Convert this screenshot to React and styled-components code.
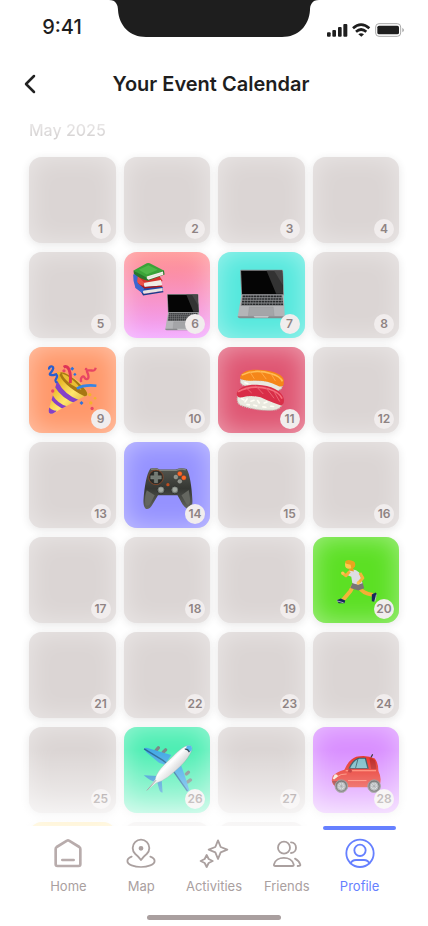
import React from "react";
import styled, { createGlobalStyle } from "styled-components";

const GlobalStyle = createGlobalStyle`
  *, *::before, *::after { box-sizing: border-box; }
  body {
    margin: 0;
    background: #fff;
    color: #1e1e1e;
    font-family: Inter, "Liberation Sans", sans-serif;
  }
`;

const Screen = styled.div`
  display: flex;
  flex-direction: column;
  height: 100vh;
  overflow: hidden;
`;

const StatusBar = styled.div`
  display: grid;
  grid-template-columns: 1fr 210px 1fr;
  height: 56px;
`;

const Clock = styled.time`
  justify-self: center;
  padding: 14px 0 0 15px;
  font-size: 20px;
  line-height: 26px;
  font-weight: 500;
`;

const Indicators = styled.div`
  display: flex;
  justify-content: flex-end;
  padding: 22px 23px 0 0;
`;

const Header = styled.header`
  display: grid;
  grid-template-columns: 24px 1fr 24px;
  align-items: center;
  height: 56px;
  padding: 0 24px 0 18px;
`;

const BackButton = styled.button`
  display: grid;
  place-items: center;
  width: 24px;
  height: 24px;
  padding: 0;
  border: 0;
  background: none;
  color: #222;
  cursor: pointer;
`;

const Title = styled.h1`
  margin: 0;
  text-align: center;
  font-size: 20px;
  line-height: 28px;
  font-weight: 600;
`;

const Calendar = styled.main`
  flex: 1;
  min-height: 0;
  overflow: auto;
  padding: 7px 29px 0;
  scrollbar-width: none;
`;

const Month = styled.h2`
  margin: 0 0 16px;
  font-size: 16px;
  line-height: 22px;
  font-weight: 500;
  background: linear-gradient(#e9e7e7 20%, #d3d0d0 90%);
  background-clip: text;
  color: transparent;
`;

const Days = styled.ol`
  display: grid;
  grid-template-columns: repeat(4, 1fr);
  gap: 9px 8px;
  margin: 0;
  padding: 0;
  list-style: none;
`;

const Day = styled.li`
  display: grid;
  grid-template: minmax(0, 1fr) / minmax(0, 1fr);
  height: 86px;
  border-radius: 13px;
  background: ${(p) => p.$fill || "#dbd5d4"};
  box-shadow:
    0 2px 8px rgba(60, 50, 50, 0.12),
    inset 0 0 26px rgba(255, 255, 255, 0.45);
`;

const Art = styled.svg`
  grid-area: 1 / 1;
  width: 100%;
  height: 100%;
`;

const Badge = styled.span`
  grid-area: 1 / 1;
  place-self: end;
  z-index: 1;
  display: grid;
  place-items: center;
  width: 20px;
  height: 20px;
  margin: 0 5px 4px 0;
  border-radius: 50%;
  background: #f1eded;
  color: #8e8383;
  font-size: 12px;
  line-height: 16px;
  font-weight: 600;
`;

const TabBar = styled.nav`
  position: relative;
  z-index: 2;
  display: grid;
  grid-template-columns: repeat(5, 1fr);
  padding: 0 32px;
  background: #fff;

  &::before {
    content: "";
    position: absolute;
    left: 0;
    right: 0;
    bottom: 100%;
    height: 76px;
    background: linear-gradient(rgba(255, 255, 255, 0), rgba(255, 255, 255, 0.75));
    pointer-events: none;
  }
`;

const Tab = styled.a`
  display: flex;
  flex-direction: column;
  align-items: center;
  gap: 8px;
  padding-top: 8px;
  border-top: 4px solid transparent;
  color: ${(p) => (p.$active ? "#6680ff" : "#aaa09f")};
  font-size: 13px;
  line-height: 20px;
  text-decoration: none;
  position: relative;

  &::before {
    content: "";
    position: absolute;
    top: -4px;
    left: 0;
    right: 0;
    height: 4px;
    border-radius: 2px;
    background: ${(p) => (p.$active ? "#6680ff" : "transparent")};
  }
`;

const TabIcon = styled.svg`
  width: 30px;
  height: 30px;
  fill: none;
  stroke: currentColor;
  stroke-width: 5.5;
  stroke-linecap: round;
  stroke-linejoin: round;
`;

const HomeBar = styled.div`
  display: flex;
  justify-content: center;
  padding: 19px 0 6px;

  &::after {
    content: "";
    width: 134px;
    height: 5px;
    border-radius: 3px;
    background: #a99f9f;
  }
`;

const Laptop = () => (
  <g>
    <path d="M87 72H211Q214 72 214 76L217 150H88L84 76Q84 72 87 72Z" fill="#8b8d8f" />
    <path d="M87 75H211L214 146H90Z" fill="#050505" />
    <path d="M164 75H211L214 144H193Z" fill="#333" />
    <path d="M187 75H211L213 118Z" fill="#474747" />
    <path d="M88 147H216L219 212Q219 217 214 217H82Q77 217 77 212Z" fill="#b4b5b8" />
    <path d="M90 149H213L215 181H86Z" fill="#8d8e91" />
    <g stroke="#26282a" strokeWidth="5" strokeDasharray="7 1.5">
      <path d="M92 152H211" />
      <path d="M91 160H212" />
      <path d="M90 168H213" />
      <path d="M89 176H214" />
    </g>
    <path d="M112 184H184L187 211H109Z" fill="#a4a5a8" stroke="#8f9094" />
    <path d="M77 212H219V214Q218 218 213 218H83Q78 218 77 214Z" fill="#88898c" />
    <path d="M125 212H171L168 216H128Z" fill="#d4d5d7" />
  </g>
);

const StudyArt = () => (
  <Art viewBox="16 18 260 260" aria-hidden="true">
    <path d="M49 124L72 142L133 136V125L109 112Z" fill="#2549a5" />
    <path d="M71 135L132 127V136L74 144Z" fill="#e7e3df" />
    <path d="M68 137L74 147L134 138" fill="none" stroke="#183b89" strokeWidth="4" />
    <path d="M43 86L55 83L78 122L71 143L50 127Q42 105 43 86Z" fill="#3b66cf" />
    <path d="M57 90L116 80L132 106L75 123L59 112Z" fill="#d3312d" />
    <path d="M73 112L127 103L131 119L78 124Z" fill="#efebe5" />
    <path d="M59 111L77 126L131 121" fill="none" stroke="#aa1618" strokeWidth="4" />
    <path d="M57 90L55 108Q61 119 73 120L77 111Z" fill="#ea5148" />
    <path d="M44 74L84 52Q88 50 93 52L137 75L85 96Q80 98 74 94Z" fill="#3aa338" />
    <path d="M44 74L83 95L136 74L138 86L88 105Q65 101 45 84Z" fill="#28782a" />
    <path d="M84 92L133 77L134 87L89 102Q82 99 84 92Z" fill="#f4f1eb" />
    <path d="M85 97L134 82" stroke="#c9c5bd" />
    <path d="M60 72L89 58L117 72L84 86Z" fill="#4fb748" />
    <g transform="translate(84 91) scale(.73 .75)">
      <Laptop />
    </g>
  </Art>
);

const LaptopArt = () => (
  <Art viewBox="18 18 260 260" aria-hidden="true">
    <Laptop />
  </Art>
);

const PartyArt = () => (
  <Art viewBox="21 19 260 260" aria-hidden="true">
    <defs>
      <linearGradient id="cone" x1="0" y1="0" x2="1" y2="1">
        <stop offset="0" stopColor="#9a6b10" />
        <stop offset=".3" stopColor="#e9b828" />
        <stop offset=".55" stopColor="#ffe66d" />
        <stop offset="1" stopColor="#c88916" />
      </linearGradient>
      <clipPath id="coneShape">
        <path d="M112 99Q119 90 136 101Q178 122 198 160Q199 169 188 168L91 221Q79 222 79 211Z" />
      </clipPath>
    </defs>
    <g clipPath="url(#coneShape)">
      <path d="M70 80H210V230H70Z" fill="url(#cone)" />
      <path d="M106 122Q128 165 174 181L162 190Q120 175 98 139Z" fill="#8540c8" />
      <path d="M91 163Q107 191 139 200L128 208Q104 199 86 177Z" fill="#8540c8" />
      <path d="M79 199Q88 211 104 212L91 225L75 218Z" fill="#8540c8" />
    </g>
    <path d="M112 99C115 118 143 145 188 168C203 168 199 151 167 124C139 100 117 91 112 99Z" fill="#a77713" />
    <path d="M120 99C124 117 151 137 179 149C165 127 139 104 120 99Z" fill="#e9bd32" />
    <path d="M125 80C139 72 148 93 145 128" fill="none" stroke="#df3457" strokeWidth="9" />
    <path d="M165 145Q186 132 224 136" fill="none" stroke="#3685e5" strokeWidth="8" />
    <path d="M81 87C79 74 99 75 92 88S78 102 88 104S106 95 105 107S94 117 105 128" fill="none" stroke="#285fce" strokeWidth="7" />
    <path d="M178 125C174 110 185 104 188 111S201 119 200 107S190 92 200 90S219 96 222 82" fill="none" stroke="#e84663" strokeWidth="7" />
    <g fill="#2e72db"><path d="M151 79l6 6-6 6-6-6ZM159 97l5 5-5 5-5-5ZM179 182l6 6-6 6-6-6Z" /></g>
    <g fill="#e84663"><circle cx="126" cy="91" r="5" /><circle cx="92" cy="152" r="5" /><circle cx="211" cy="205" r="5" /><circle cx="193" cy="86" r="4" /></g>
    <g fill="#f3b32b"><circle cx="110" cy="98" r="5" /><circle cx="204" cy="163" r="5" /><circle cx="207" cy="188" r="5" /><circle cx="220" cy="174" r="4" /></g>
  </Art>
);

const Rice = ({ d }) => <path d={d} fill="#e9e9df" stroke="#c4c7bc" strokeWidth="4" strokeDasharray="3 3" />;

const SushiArt = () => (
  <Art viewBox="18 18 260 260" aria-hidden="true">
    <Rice d="M86 116Q82 132 98 135L197 150Q212 146 211 134L191 122Z" />
    <path d="M84 109C90 91 113 86 137 87C172 87 211 98 216 116V131Q210 142 198 135Q166 118 127 119Q97 123 84 112Z" fill="#f58619" />
    <path d="M89 103Q129 83 179 99Q206 107 212 122" fill="none" stroke="#ffbd56" strokeWidth="5" />
    <path d="M113 92L127 114M145 91L163 115M177 98L191 121" stroke="#ffa848" strokeWidth="3" />
    <Rice d="M77 166Q72 188 88 195Q133 211 182 209Q209 207 211 188L181 164Z" />
    <path d="M74 158C81 138 105 131 135 132C178 133 211 151 216 174Q219 190 208 195Q190 189 166 179Q128 159 91 170Q73 174 74 158Z" fill="#d92e48" />
    <path d="M78 153Q119 130 171 145Q203 155 211 174" fill="none" stroke="#f66f7d" strokeWidth="5" />
    <path d="M101 140L119 157M131 135L154 160M163 142L187 173M188 155L204 183" stroke="#ea6675" strokeWidth="3" />
    <g stroke="#fffef5" strokeWidth="5" strokeLinecap="round">
      <path d="M88 174l8 4M105 175l-6 9M117 182l9-3M137 180l5 7M157 187l8-3M177 197l8 1M126 194l8 2M105 192l7 1M153 199l9 1M99 126l8 3" />
    </g>
  </Art>
);

const GameArt = () => (
  <Art viewBox="16 18 260 260" aria-hidden="true">
    <defs>
      <linearGradient id="pad" x1="0" y1="0" x2="0" y2="1">
        <stop offset="0" stopColor="#545650" />
        <stop offset=".5" stopColor="#353733" />
        <stop offset="1" stopColor="#62645f" />
      </linearGradient>
    </defs>
    <path d="M95 98Q113 94 123 101H171Q190 94 205 100C214 116 220 151 222 194C223 225 210 230 192 206L177 179H118L99 211C86 230 73 220 74 194C77 153 84 112 95 98Z" fill="url(#pad)" />
    <path d="M97 101Q113 97 122 104H173Q189 97 202 102" fill="none" stroke="#81837c" strokeWidth="4" />
    <path d="M84 164Q76 184 80 209Q87 214 94 206L108 179ZM189 179L205 207Q215 213 215 190L211 163Z" fill="#646660" />
    <circle cx="112" cy="125" r="22" fill="#282a27" stroke="#a54d26" strokeWidth="2" />
    <path d="M107 109h10v11h11v10h-11v11h-10v-11H96v-10h11Z" fill="#737a73" stroke="#a3a8a0" />
    <g fill="#ff6827" stroke="#ba421e"><circle cx="184" cy="114" r="7" /><circle cx="196" cy="126" r="7" /></g>
    <g fill="#90938c" stroke="#b8bbb1"><circle cx="172" cy="124" r="6" /><circle cx="184" cy="137" r="6" /></g>
    <circle cx="148" cy="147" r="5" fill="#bd4e21" />
    <g fill="#727873" stroke="#30322f" strokeWidth="3"><circle cx="127" cy="163" r="12" /><circle cx="169" cy="163" r="12" /></g>
    <g fill="#a1a7a0"><circle cx="127" cy="162" r="7" /><circle cx="169" cy="162" r="7" /></g>
  </Art>
);

const RunArt = () => (
  <Art viewBox="21 17 260 260" aria-hidden="true">
    <path d="M144 161L133 181L110 208" fill="none" stroke="#f4b33b" strokeWidth="12" strokeLinejoin="round" />
    <path d="M161 169Q168 187 201 192" fill="none" stroke="#f3ae35" strokeWidth="11" />
    <path d="M104 203L118 209L115 217H98L92 208Z" fill="#17275a" />
    <path d="M198 191L210 185Q214 187 212 195L206 213L198 211Z" fill="#17275a" />
    <path d="M92 210L113 216M207 212L212 191" stroke="#e9e6eb" strokeWidth="2" />
    <path d="M142 151L170 153L175 172L157 179L133 171Z" fill="#797574" />
    <path d="M130 118Q145 110 160 124L170 157Q155 164 139 156L136 137L123 132Z" fill="#dedde2" />
    <path d="M131 121L120 134L109 126" fill="none" stroke="#f4b33b" strokeWidth="9" strokeLinejoin="round" />
    <path d="M162 126L171 141L158 155" fill="none" stroke="#f4b33b" strokeWidth="9" strokeLinejoin="round" />
    <path d="M127 114L141 109L144 121L132 119Z" fill="#e99b27" />
    <circle cx="129" cy="101" r="12" fill="#ffc94c" />
    <path d="M117 92Q122 84 136 88Q152 91 147 107L137 116L134 101L121 98Z" fill="#e9a51e" />
    <circle cx="110" cy="126" r="5" fill="#ffc452" />
    <circle cx="157" cy="156" r="5" fill="#ffc452" />
  </Art>
);

const PlaneArt = () => (
  <Art viewBox="16 18 260 260" aria-hidden="true">
    <defs>
      <linearGradient id="fuselage" x1="0" y1="0" x2="1" y2="1">
        <stop offset=".2" stopColor="#aeb1b4" />
        <stop offset=".45" stopColor="#fff" />
        <stop offset=".75" stopColor="#a5a7aa" />
      </linearGradient>
    </defs>
    <g stroke="#7c8788" strokeWidth="10" strokeLinecap="round">
      <path d="M112 89L119 81M134 94L141 87M204 160L210 155M208 184L216 178" />
    </g>
    <path d="M76 84Q79 79 89 82L158 103L139 132L121 126L84 95Z" fill="#43a9e5" />
    <path d="M76 84L133 119L143 127" fill="none" stroke="#276896" strokeWidth="4" />
    <path d="M163 149L186 129Q199 162 212 208Q210 216 206 212L180 177Z" fill="#43a9e5" />
    <path d="M164 151L207 212" stroke="#236c9a" strokeWidth="4" />
    <path d="M75 164L116 166L111 184Q98 184 75 164Z" fill="#2a91d1" />
    <path d="M115 181L129 178L132 216Q125 218 121 205Z" fill="#2a91d1" />
    <path d="M205 75Q224 69 220 89C207 121 177 146 148 169Q129 183 112 187L87 208L110 176C113 156 134 133 155 115C177 93 190 80 205 75Z" fill="url(#fuselage)" stroke="#84999b" />
    <path d="M205 75Q224 69 220 89L216 92Q207 91 203 82Z" fill="#58b9ed" />
    <path d="M199 85Q208 83 213 94" fill="none" stroke="#344b5b" strokeWidth="4" />
    <path d="M84 210L112 179" stroke="#717c7b" strokeWidth="3" />
  </Art>
);

const CarArt = () => (
  <Art viewBox="21 18 260 260" aria-hidden="true">
    <path d="M195 111L200 102" stroke="#333" strokeWidth="4" strokeLinecap="round" />
    <path d="M80 166Q90 154 115 147Q128 117 151 108Q181 101 207 113Q218 127 218 151Q229 172 222 194L213 200H92Q77 192 77 179Z" fill="#e72c22" />
    <path d="M127 144Q139 117 158 111H180L189 144Z" fill="#264f5c" />
    <path d="M133 142Q144 118 160 114H177L184 142Z" fill="#78bcc7" />
    <path d="M156 115L149 142" stroke="#355f6b" strokeWidth="3" />
    <path d="M191 112Q205 113 209 124L212 145H196Z" fill="#b91b18" />
    <path d="M119 150H211" stroke="#ff7a61" strokeWidth="4" />
    <path d="M88 171Q106 158 122 160M126 180H182" fill="none" stroke="#ff8067" strokeWidth="3" />
    <path d="M127 147L133 143L139 151L135 156L126 154Z" fill="#b81616" />
    <path d="M86 161Q96 161 95 168L84 177L80 174Z" fill="#f5ead6" />
    <path d="M78 181H97L94 194H84Z" fill="#931919" />
    <g fill="#424242" stroke="#777" strokeWidth="3"><circle cx="106" cy="197" r="19" /><circle cx="205" cy="197" r="19" /></g>
    <g fill="#c9cdd0" stroke="#898d90" strokeWidth="3"><circle cx="106" cy="197" r="12" /><circle cx="205" cy="197" r="12" /></g>
    <path d="M106 186v22M95 197h22M98 189l16 16M114 189l-16 16M205 186v22M194 197h22M197 189l16 16M213 189l-16 16" stroke="#777c80" strokeWidth="2" />
  </Art>
);

const events = {
  6: { fill: "linear-gradient(#ff8888, #f19fff)", Picture: StudyArt, name: "Study" },
  7: { fill: "#54e8dd", Picture: LaptopArt, name: "Laptop" },
  9: { fill: "#ff986a", Picture: PartyArt, name: "Party" },
  11: { fill: "#df5572", Picture: SushiArt, name: "Sushi" },
  14: { fill: "#9592ff", Picture: GameArt, name: "Gaming" },
  20: { fill: "#5ce024", Picture: RunArt, name: "Run" },
  26: { fill: "#4deeb3", Picture: PlaneArt, name: "Flight" },
  28: { fill: "#d98fff", Picture: CarArt, name: "Drive" },
};

const upcoming = [{ id: "a", fill: "#ffd863" }, { id: "b" }, { id: "c" }];

const tabs = [
  {
    label: "Home",
    box: "160 70 90 90",
    icon: (
      <path d="M168 103Q168 99 171 97L202 78Q205 76 208 78L239 97Q242 99 242 103V149Q242 154 237 154H173Q168 154 168 149ZM188 136H222" stroke="#b8acac" strokeWidth="8" />
    ),
  },
  {
    label: "Map",
    box: "379 70 90 90",
    icon: (
      <>
        <path d="M424 136Q417 126 407 118Q399 110 399 100A25 25 0 0 1 449 100Q449 110 441 118Q431 126 424 136Z" />
        <circle cx="424" cy="101" r="4.5" fill="currentColor" />
        <path d="M396 126C379 132 379 146 396 152C412 158 436 158 452 152C469 146 469 132 452 126" />
      </>
    ),
  },
  {
    label: "Activities",
    box: "597 70 90 90",
    icon: (
      <>
        <path d="M654 77L662 97L682 105L662 113L654 133L646 113L626 105L646 97Z" />
        <path d="M620 121L626 133L638 139L626 145L620 157L614 145L602 139L614 133Z" />
      </>
    ),
  },
  {
    label: "Friends",
    box: "191 70 90 90",
    icon: (
      <>
        <circle cx="227" cy="99" r="18" />
        <path d="M248 83C268 84 268 114 248 115M201 154Q196 154 197 149C203 123 250 123 256 149Q257 154 252 154ZM260 132Q272 138 276 150Q277 154 268 154" />
      </>
    ),
  },
  {
    label: "Profile",
    box: "410 70 90 90",
    active: true,
    icon: (
      <>
        <circle cx="455" cy="116" r="41" />
        <circle cx="455" cy="107" r="17" />
        <path d="M427 146Q431 136 443 136H467Q479 136 483 146" />
      </>
    ),
  },
];

export default function App() {
  const days = Array.from({ length: 28 }, (_, i) => i + 1);
  return (
    <>
      <GlobalStyle />
      <Screen>
        <StatusBar>
          <Clock>9:41</Clock>
          <svg width="210" height="37" viewBox="0 0 210 37" aria-hidden="true">
            <path d="M0 0H210C203 0 201 5 201 10C200 26 189 37 173 37H37C21 37 10 26 9 10C9 5 7 0 0 0Z" fill="#1e1e1e" />
          </svg>
          <Indicators>
            <svg width="78" height="16" viewBox="0 0 234 48" fill="#1e1e1e" aria-hidden="true">
              <rect x="0" y="31" width="11" height="13" rx="3" />
              <rect x="16" y="24" width="11" height="20" rx="3" />
              <rect x="33" y="15" width="11" height="29" rx="3" />
              <rect x="49" y="6" width="12" height="38" rx="3" />
              <g fill="none" stroke="#1e1e1e" strokeWidth="8">
                <path d="M78 19Q102 -3 127 19M87 29Q102 16 118 29" />
              </g>
              <path d="M94 37Q102 31 111 37L103 44Z" />
              <rect x="146" y="5" width="75" height="38" rx="10" fill="none" stroke="#aaa" strokeWidth="3" />
              <rect x="151" y="11" width="65" height="26" rx="5" />
              <path d="M226 17Q236 24 226 31Z" fill="#aaa" />
            </svg>
          </Indicators>
        </StatusBar>
        <Header>
          <BackButton type="button" aria-label="Back">
            <svg width="12" height="20" viewBox="0 0 12 20" fill="none" stroke="currentColor" strokeWidth="2.5" strokeLinecap="round" strokeLinejoin="round" aria-hidden="true">
              <path d="M10 2L2 10L10 18" />
            </svg>
          </BackButton>
          <Title>Your Event Calendar</Title>
        </Header>
        <Calendar>
          <Month>May 2025</Month>
          <Days>
            {days.map((day) => {
              const { fill, Picture, name } = events[day] || {};
              return (
                <Day key={day} $fill={fill} aria-label={name}>
                  {Picture && <Picture />}
                  <Badge>{day}</Badge>
                </Day>
              );
            })}
            {upcoming.map(({ id, fill }) => (
              <Day key={id} $fill={fill} />
            ))}
          </Days>
        </Calendar>
        <TabBar>
          {tabs.map(({ label, box, icon, active }) => (
            <Tab key={label} href={`#${label.toLowerCase()}`} $active={active} aria-current={active ? "page" : undefined}>
              <TabIcon viewBox={box} aria-hidden="true">{icon}</TabIcon>
              {label}
            </Tab>
          ))}
        </TabBar>
        <HomeBar />
      </Screen>
    </>
  );
}
